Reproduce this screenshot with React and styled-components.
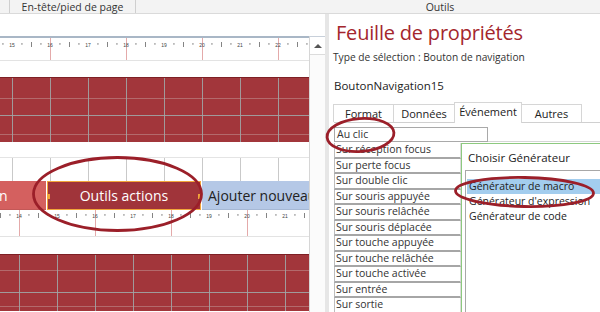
import React from "react";
import styled, { createGlobalStyle } from "styled-components";

const GlobalStyle = createGlobalStyle`
  html, body {
    margin: 0;
    padding: 0;
    background: #ffffff;
    font-family: "Open Sans", "Noto Sans", sans-serif;
    color: #262626;
  }
  * { box-sizing: border-box; }
`;

const RED = "#a2363b";
const ANNOT = "#9b1f29";

const Screen = styled.div`
  position: relative;
  width: 600px;
  height: 312px;
  overflow: hidden;
  display: flex;
  flex-direction: column;
  background: #fff;
`;

const TopBar = styled.div`
  height: 14px;
  flex: none;
  display: flex;
  align-items: center;
  background: #f3f3f3;
  border-bottom: 1px solid #dadada;
  font-size: 10.5px;
  color: #333;
`;

const BarCell = styled.div`
  width: ${p => p.$w}px;
  height: 100%;
  display: flex;
  align-items: center;
  justify-content: center;
  line-height: 12px;
  border-right: ${p => (p.$sep ? "1px solid #cfcfcf" : "none")};
`;

const Main = styled.div`
  flex: 1;
  display: flex;
  min-height: 0;
`;

const Designer = styled.div`
  width: 325px;
  flex: none;
  display: flex;
  flex-direction: column;
  background: #fff;
`;

const Blank = styled.div`
  height: ${p => p.$h}px;
  flex: none;
  background: #fff;
`;

const DesignBody = styled.div`
  flex: 1;
  display: flex;
`;

const Canvas = styled.div`
  width: 309px;
  flex: none;
  display: flex;
  flex-direction: column;
  overflow: hidden;
`;

const Scrollbar = styled.div`
  flex: 1;
  background: #fbfbfb;
  border-left: 1px solid #d6d6d6;
  border-top: 1px solid #c8d0da;
`;

const ArrowBtn = styled.div`
  height: 18px;
  display: flex;
  align-items: center;
  justify-content: center;
  background: #fff;
  border-bottom: 1px solid #dcdcdc;
  &::after {
    content: "";
    border-left: 4px solid transparent;
    border-right: 4px solid transparent;
    border-bottom: 4px solid #555;
  }
`;

const RulerBox = styled.div`
  height: ${p => p.$h}px;
  flex: none;
  background: #fff;
  border-top: ${p => (p.$top ? "2px solid #a9b7c6" : "none")};
  border-bottom: 1px solid #e3e3e3;
  svg { display: block; }
`;

const RedGrid = styled.div`
  height: ${p => p.$h}px;
  flex: none;
  background-color: ${RED};
  border-top: 1px solid #7e2025;
  background-image:
    linear-gradient(to right, rgba(160, 165, 165, 0.9) 1px, transparent 1px),
    linear-gradient(to bottom, rgba(160, 165, 165, 0.9) 1px, transparent 1px),
    linear-gradient(to bottom, rgba(190, 140, 140, 0.6) 1px, transparent 1px);
  background-size: 38px 100%, 100% 38px, 100% 36px;
  background-position: ${p => p.$x}px 0, 0 ${p => p.$y}px, 0 ${p => p.$y2}px;
  background-repeat: repeat-x, repeat-y, repeat-y;
`;

const WhiteGrid = styled.div`
  height: ${p => p.$h}px;
  flex: none;
  background-color: #fff;
  border-top: 1px solid #e4e4e4;
  background-image: linear-gradient(to right, #c9c9c9 1px, transparent 1px);
  background-size: 38px 100%;
  background-position: 12px 0;
  background-repeat: repeat-x;
`;

const NavRow = styled.div`
  height: 29px;
  flex: none;
  display: grid;
  grid-template-columns: 46px 154px 1fr;
  column-gap: 1px;
  background: #fff;
`;

const NavButton = styled.div`
  position: relative;
  display: flex;
  align-items: center;
  justify-content: ${p => (p.$align === "start" ? "flex-start" : "center")};
  padding: 0 ${p => (p.$align === "start" ? "6px" : "0")};
  background: ${p => p.$bg};
  color: ${p => p.$fg};
  font-size: 14px;
  white-space: nowrap;
  overflow: hidden;
  border: ${p => (p.$selected ? "1px solid #f2a63b" : "none")};
  border-bottom: ${p => (p.$selected ? "1px solid #f2a63b" : "1px solid rgba(0,0,0,0.08)")};
`;

const CutLabel = styled.span`
  margin-left: ${p => p.$shift}px;
`;

const Handle = styled.span`
  position: absolute;
  top: 50%;
  ${p => p.$side}: -3px;
  width: 5px;
  height: 5px;
  margin-top: -2px;
  background: #f0a43a;
`;

const Divider = styled.div`
  width: 4px;
  flex: none;
  background: #e6e6e6;
`;

const Sheet = styled.div`
  flex: 1;
  display: flex;
  flex-direction: column;
  padding-left: 4px;
  background: #fff;
  min-width: 0;
`;

const Title = styled.div`
  font-size: 20px;
  line-height: 26px;
  color: #a4262c;
  padding: 6px 0 0 3px;
  letter-spacing: -0.2px;
`;

const SelType = styled.div`
  font-size: 10.2px;
  line-height: 14px;
  margin-top: 4px;
  color: #333;
`;

const ObjName = styled.div`
  font-size: 11.5px;
  line-height: 14px;
  margin-top: 15px;
  padding-left: 1px;
  color: #222;
`;

const TabStrip = styled.div`
  margin-top: 9px;
  height: 21px;
  display: flex;
  align-items: flex-end;
  border-bottom: 1px solid #d0d0d0;
  margin-left: 1px;
`;

const Tab = styled.div`
  width: ${p => p.$w}px;
  height: ${p => (p.$active ? 21 : 18)}px;
  display: flex;
  align-items: center;
  justify-content: center;
  font-size: 11px;
  color: #222;
  background: #fff;
  border: 1px solid #d6d6d6;
  border-bottom: none;
  margin-bottom: ${p => (p.$active ? "-1px" : "0")};
  padding-bottom: ${p => (p.$active ? "3px" : "0")};
  margin-left: -1px;
  position: relative;
`;

const FirstRow = styled.div`
  margin-top: 4px;
  margin-left: 1px;
  height: 15px;
  display: flex;
  border-bottom: 1px solid #d6d6d6;
`;

const ActiveCell = styled.div`
  width: 154px;
  height: 15px;
  border: 1px solid #a9a9a9;
  font-size: 10.5px;
  line-height: 13px;
  padding-left: 2px;
  color: #333;
`;

const Lower = styled.div`
  flex: 1;
  display: grid;
  grid-template-columns: 127px 1fr;
  margin-left: 1px;
  margin-top: 1px;
  min-height: 0;
`;

const PropList = styled.div`
  display: flex;
  flex-direction: column;
`;

const PropRow = styled.div`
  height: 15.5px;
  flex: none;
  border-left: 1px solid #bdbdbd;
  border-bottom: 2px solid #a6a6a6;
  border-right: 1px solid #dcdcdc;
  font-size: 10.5px;
  line-height: 13px;
  padding-left: 1px;
  color: #333;
  white-space: nowrap;
  overflow: hidden;
`;

const Dialog = styled.div`
  border-left: 1px solid #8dc97f;
  border-top: 1px solid #8dc97f;
  background: #fff;
  display: flex;
  flex-direction: column;
  padding-left: 3px;
`;

const DialogTitle = styled.div`
  font-size: 11.5px;
  line-height: 16px;
  padding: 6px 0 0 3px;
  color: #222;
`;

const ListBox = styled.div`
  flex: 1;
  margin-top: 4px;
  border-left: 1px solid #a8a8a8;
  border-top: 1px solid #a8a8a8;
  padding-top: 8px;
  display: flex;
  flex-direction: column;
`;

const ListItem = styled.div`
  height: 15px;
  font-size: 10.5px;
  line-height: 15px;
  padding-left: 2px;
  color: #222;
  background: ${p => (p.$selected ? "#a3cdee" : "transparent")};
  margin-left: 1px;
`;

const Overlay = styled.svg`
  position: absolute;
  left: 0;
  top: 0;
  pointer-events: none;
`;

function Ruler({ h, start, first, redEvery, top, tickY }) {
  const items = [];
  for (let k = -1; k < 9; k++) {
    const x = start + k * 38;
    const label = first + k;
    if (redEvery.includes(label)) {
      items.push(<line key={"r" + k} x1={x + 0.5} x2={x + 0.5} y1={0} y2={h} stroke="#e4aaaa" strokeWidth="1" />);
    }
    items.push(
      <text key={"t" + k} x={x} y={tickY + 4} fontSize="5" textAnchor="middle" fill="#444" fontFamily="Liberation Sans, sans-serif">{label}</text>
    );
    [9.5, 28.5].forEach((d, i) => {
      items.push(<rect key={`s${k}${i}`} x={x + d} y={tickY} width="0.9" height="1.8" fill="#777" />);
    });
    items.push(<rect key={"m" + k} x={x + 19} y={tickY - 1} width="0.9" height="5" fill="#777" />);
  }
  return (
    <RulerBox $h={h} $top={top}>
      <svg width="309" height={h - (top ? 3 : 1)}>{items}</svg>
    </RulerBox>
  );
}

const props = [
  "Sur réception focus",
  "Sur perte focus",
  "Sur double clic",
  "Sur souris appuyée",
  "Sur souris relâchée",
  "Sur souris déplacée",
  "Sur touche appuyée",
  "Sur touche relâchée",
  "Sur touche activée",
  "Sur entrée",
  "Sur sortie",
];

export default function App() {
  return (
    <>
      <GlobalStyle />
      <Screen>
        <TopBar>
          <BarCell $w={10} $sep />
          <BarCell $w={126} $sep>En-tête/pied de page</BarCell>
          <BarCell $w={189} />
          <BarCell $w={230}>Outils</BarCell>
        </TopBar>
        <Main>
          <Designer>
            <Blank $h={22} />
            <DesignBody>
              <Canvas>
                <Ruler h={25} start={12} first={15} redEvery={[16, 18, 20, 22]} top tickY={5} />
                <Blank $h={16} />
                <RedGrid $h={65} $x={12} $y={37} $y2={200} />
                <Blank $h={15} />
                <WhiteGrid $h={24} />
                <NavRow>
                  <NavButton $bg="#d4605f" $fg="#fff" $align="start">
                    <CutLabel $shift={-19}>ion</CutLabel>
                  </NavButton>
                  <NavButton $bg="#a0343a" $fg="#fff" $selected>
                    Outils actions
                    <Handle $side="left" />
                    <Handle $side="right" />
                  </NavButton>
                  <NavButton $bg="#b5c8e6" $fg="#222" $align="start">
                    Ajouter nouveau
                  </NavButton>
                </NavRow>
                <Ruler h={27} start={19} first={14} redEvery={[14, 16, 18, 20]} tickY={4} />
                <Blank $h={17} />
                <RedGrid $h={57} $x={19} $y={37} $y2={15} />
              </Canvas>
              <Scrollbar>
                <ArrowBtn />
              </Scrollbar>
            </DesignBody>
          </Designer>
          <Divider />
          <Sheet>
            <Title>Feuille de propriétés</Title>
            <SelType>Type de sélection : Bouton de navigation</SelType>
            <ObjName>BoutonNavigation15</ObjName>
            <TabStrip>
              <Tab $w={61}>Format</Tab>
              <Tab $w={62}>Données</Tab>
              <Tab $w={68} $active>Événement</Tab>
              <Tab $w={61}>Autres</Tab>
            </TabStrip>
            <FirstRow>
              <ActiveCell>Au clic</ActiveCell>
            </FirstRow>
            <Lower>
              <PropList>
                {props.map(p => (
                  <PropRow key={p}>{p}</PropRow>
                ))}
              </PropList>
              <Dialog>
                <DialogTitle>Choisir Générateur</DialogTitle>
                <ListBox>
                  <ListItem $selected>Générateur de macro</ListItem>
                  <ListItem>Générateur d'expression</ListItem>
                  <ListItem>Générateur de code</ListItem>
                </ListBox>
              </Dialog>
            </Lower>
          </Sheet>
        </Main>
        <Overlay width="600" height="312" viewBox="0 0 600 312">
          <g fill="none" stroke={ANNOT} strokeWidth="2.8">
            <ellipse cx="117.5" cy="194" rx="84" ry="36.5" />
            <ellipse cx="360.5" cy="135" rx="33.5" ry="16.5" transform="rotate(-4 360.5 135)" />
            <ellipse cx="524.5" cy="192" rx="69" ry="14.5" transform="rotate(1 524.5 192)" />
          </g>
        </Overlay>
      </Screen>
    </>
  );
}
